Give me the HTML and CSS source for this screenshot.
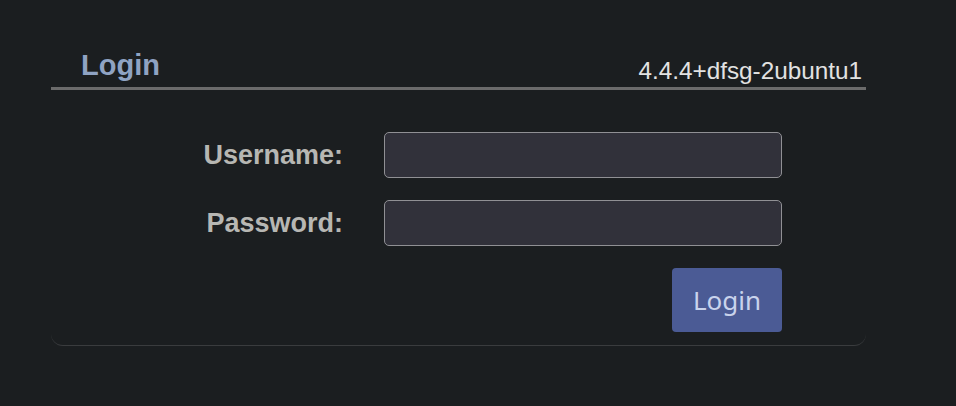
FILE: index.html
```html
<!DOCTYPE html>
<html>
<head>
<meta charset="utf-8">
<link rel="stylesheet" href="styles.css">
</head>
<body>
<div class="panel">
  <div class="panel-head">
    <h1 class="title">Login</h1>
    <span class="version">4.4.4+dfsg-2ubuntu1</span>
  </div>
  <form class="login-form">
    <label class="field-label" for="user">Username:</label>
    <input class="field-input" id="user" type="text">
    <label class="field-label" for="pass">Password:</label>
    <input class="field-input" id="pass" type="password">
    <div class="actions">
      <button class="login-btn" type="button">Login</button>
    </div>
  </form>
</div>
</body>
</html>
```

FILE: styles.css
```css
html, body {
  margin: 0;
  padding: 0;
  background: #1b1e20;
  height: 100%;
}
body {
  font-family: "Liberation Sans", Arial, sans-serif;
  padding-top: 47px;
  box-sizing: border-box;
}
.panel {
  margin-left: 51px;
  width: 815px;
  border-bottom: 1px solid #3a3c3e;
  border-radius: 0 0 12px 12px;
  padding-bottom: 13px;
}
.panel-head {
  display: flex;
  justify-content: space-between;
  align-items: flex-end;
  border-bottom: 3px solid #6b6b6b;
  padding: 0 4px 4px 30px;
  height: 36px;
}
.title {
  margin: 2px 0 0;
  font-size: 29px;
  font-weight: bold;
  color: #8fa3c3;
  line-height: 32px;
  align-self: flex-start;
}
.version {
  font-size: 24.3px;
  color: #e2e2e2;
  line-height: 26px;
  margin-bottom: -1px;
}
.login-form {
  display: grid;
  grid-template-columns: 292px 398px;
  column-gap: 41px;
  row-gap: 22px;
  margin-top: 42px;
  align-items: center;
}
.field-label {
  text-align: right;
  font-size: 27px;
  font-weight: bold;
  color: #b7b7b3;
}
.field-input {
  box-sizing: border-box;
  height: 46px;
  width: 398px;
  background: #31313a;
  border: 1.5px solid #909094;
  border-radius: 5px;
  margin: 0;
}
.actions {
  grid-column: 2;
  display: flex;
  justify-content: flex-end;
}
.login-btn {
  width: 110px;
  height: 64px;
  background: #4b5b95;
  color: #c9d3ec;
  border: none;
  border-radius: 4px;
  font-family: "Noto Sans", sans-serif;
  font-size: 26px;
  padding: 0;
}
```
